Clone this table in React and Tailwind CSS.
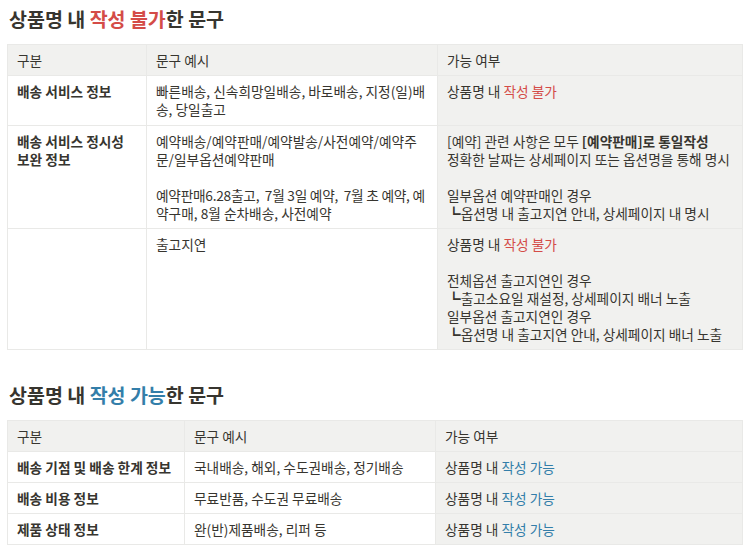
import React from "react";

const Red = ({ children }) => <span className="text-[#d44c47]">{children}</span>;
const Blue = ({ children }) => <span className="text-[#337ea9]">{children}</span>;

const th = "border border-[#e9e9e7] bg-[#f1f1ef] px-[9px] py-[6px] text-left font-normal align-top whitespace-nowrap";
const td = "border border-[#e9e9e7] px-[9px] py-[6px] align-top whitespace-pre";
const tdB = td + " font-bold";
const tdG = td + " bg-[#f1f1ef]";

export default function App() {
  return (
    <div className="w-[751px] h-[556px] bg-white px-[7px] pt-[6px] font-['Noto_Sans_CJK_KR','Noto_Sans',sans-serif] text-[#37352f]">
      <h2 className="text-[19.5px] font-bold leading-[26px] pl-[2px]">
        상품명 내 <Red>작성 불가</Red>한 문구
      </h2>
      <table className="mt-[12px] w-[735px] table-fixed border-collapse text-[13.7px] leading-[18px]">
        <colgroup>
          <col className="w-[139px]" />
          <col className="w-[291px]" />
          <col className="w-[305px]" />
        </colgroup>
        <thead>
          <tr>
            <th className={th}>구분</th>
            <th className={th}>문구 예시</th>
            <th className={th}>가능 여부</th>
          </tr>
        </thead>
        <tbody>
          <tr>
            <td className={tdB + " pb-[7px]"}>배송 서비스 정보</td>
            <td className={td + " pb-[7px]"}>{"빠른배송, 신속희망일배송, 바로배송, 지정(일)배\n송, 당일출고"}</td>
            <td className={tdG + " pb-[7px]"}>
              상품명 내 <Red>작성 불가</Red>
            </td>
          </tr>
          <tr>
            <td className={tdB}>{"배송 서비스 정시성\n보완 정보"}</td>
            <td className={td}>
              {"예약배송/예약판매/예약발송/사전예약/예약주\n문/일부옵션예약판매\n\n"}
              <span className="tracking-[-0.25px]">{"예약판매6.28출고,  7월 3일 예약,  7월 초 예약, 예"}</span>
              {"\n약구매, 8월 순차배송, 사전예약"}
            </td>
            <td className={tdG}>
              {"[예약] 관련 사항은 모두 "}
              <b>[예약판매]로 통일작성</b>
              {"\n정확한 날짜는 상세페이지 또는 옵션명을 통해 명시\n\n일부옵션 예약판매인 경우\n┗옵션명 내 출고지연 안내, 상세페이지 내 명시"}
            </td>
          </tr>
          <tr>
            <td className={tdB}></td>
            <td className={td}>출고지연</td>
            <td className={tdG}>
              상품명 내 <Red>작성 불가</Red>
              {"\n\n전체옵션 출고지연인 경우\n┗출고소요일 재설정, 상세페이지 배너 노출\n일부옵션 출고지연인 경우\n┗옵션명 내 출고지연 안내, 상세페이지 배너 노출"}
            </td>
          </tr>
        </tbody>
      </table>

      <h2 className="mt-[32px] text-[19.5px] font-bold leading-[26px] pl-[2px]">
        상품명 내 <Blue>작성 가능</Blue>한 문구
      </h2>
      <table className="mt-[12px] w-[735px] table-fixed border-collapse text-[13.7px] leading-[18px]">
        <colgroup>
          <col className="w-[177px]" />
          <col className="w-[251px]" />
          <col className="w-[307px]" />
        </colgroup>
        <thead>
          <tr>
            <th className={th}>구분</th>
            <th className={th}>문구 예시</th>
            <th className={th}>가능 여부</th>
          </tr>
        </thead>
        <tbody>
          <tr>
            <td className={tdB}>배송 기점 및 배송 한계 정보</td>
            <td className={td}>국내배송, 해외, 수도권배송, 정기배송</td>
            <td className={tdG}>
              상품명 내 <Blue>작성 가능</Blue>
            </td>
          </tr>
          <tr>
            <td className={tdB}>배송 비용 정보</td>
            <td className={td}>무료반품, 수도권 무료배송</td>
            <td className={tdG}>
              상품명 내 <Blue>작성 가능</Blue>
            </td>
          </tr>
          <tr>
            <td className={tdB}>제품 상태 정보</td>
            <td className={td}>완(반)제품배송, 리퍼 등</td>
            <td className={tdG}>
              상품명 내 <Blue>작성 가능</Blue>
            </td>
          </tr>
        </tbody>
      </table>
    </div>
  );
}
